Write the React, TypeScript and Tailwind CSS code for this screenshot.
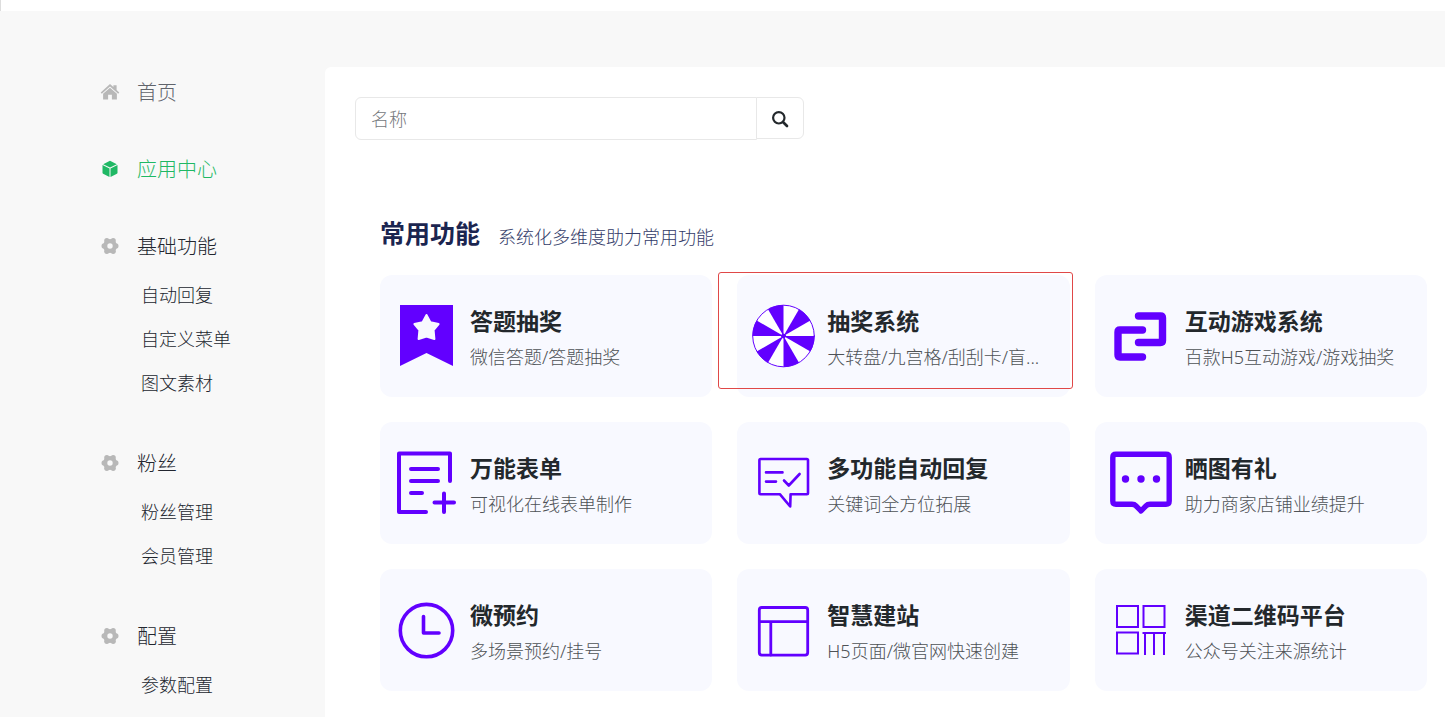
import type { ReactNode } from "react";

const PURPLE = "#6200ff";

function HomeIcon() {
  return (
    <svg viewBox="0 0 20 18" className="h-[18px] w-5" fill="#b8b8b8" aria-hidden="true">
      <path d="M10 1 13.4 4.1V2.2H16.6V7L19.3 9.5 18.2 10.8 10 3.6 1.8 10.8.7 9.5Z" />
      <path d="M10 4.7 16.9 10.8V16.6H11.9V11.8H8.1V16.6H3.1V10.8Z" />
    </svg>
  );
}

function CubeIcon() {
  return (
    <svg viewBox="0 0 18 18" className="h-[18px] w-[18px]" fill="#1fb864" aria-hidden="true">
      <path d="M9 .8 15.8 4.2 9 7.5 2.2 4.2Z" />
      <path d="M1.5 5.1 8.5 8.5V17L2.1 13.8Q1.5 13.5 1.5 12.8Z" />
      <path d="M16.5 5.1 9.5 8.5V17L15.9 13.8Q16.5 13.5 16.5 12.8Z" />
    </svg>
  );
}

function GearIcon() {
  return (
    <svg viewBox="0 0 18 18" className="h-[18px] w-[18px]" aria-hidden="true">
      <circle cx="9" cy="9" r="4.8" strokeWidth="4.2" fill="none" stroke="#b8b8b8" />
      <g fill="#b8b8b8">
        <circle cx="3.2" cy="9" r="2.7" />
        <circle cx="14.8" cy="9" r="2.7" />
        <circle cx="5.8" cy="3.7" r="2.6" />
        <circle cx="12.2" cy="3.7" r="2.6" />
        <circle cx="5.8" cy="14.3" r="2.6" />
        <circle cx="12.2" cy="14.3" r="2.6" />
      </g>
    </svg>
  );
}

function CardIcon({ width = 3, children }: { width?: number; children: ReactNode }) {
  return (
    <svg
      viewBox="0 0 64 64"
      className="h-16 w-16 shrink-0"
      fill="none"
      stroke={PURPLE}
      strokeWidth={width}
      strokeLinecap="round"
      strokeLinejoin="round"
      aria-hidden="true"
    >
      {children}
    </svg>
  );
}

function wedge(index: number) {
  const at = (deg: number) => {
    const rad = (deg * Math.PI) / 180;
    return `${(31.5 + 31 * Math.cos(rad)).toFixed(2)} ${(32 + 31 * Math.sin(rad)).toFixed(2)}`;
  };
  return `M31.5 32L${at(index * 60)}A31 31 0 0 1 ${at(index * 60 + 30)}Z`;
}

const bookmark = (
  <CardIcon width={0}>
    <path fill={PURPLE} d="M5 1H58V62L31.5 49 5 62Z" />
    <path
      fill="#f8f9ff"
      stroke="#f8f9ff"
      strokeWidth="2"
      d="M31.5 11 35.4 18.2 43.6 20 38.6 26 39.4 35 31.5 32.6 23.6 35 24.4 26 19.4 20 27.6 18.2Z"
    />
  </CardIcon>
);

const wheel = (
  <CardIcon width={1}>
    <circle cx="31.5" cy="32" r="30.8" fill="#fff" />
    {[0, 1, 2, 3, 4, 5].map((i) => (
      <path key={i} d={wedge(i)} fill={PURPLE} stroke="none" />
    ))}
    <circle cx="31.5" cy="32" r="2" fill={PURPLE} />
  </CardIcon>
);

const link = (
  <CardIcon width={7.4}>
    <path d="M28.5 12H50.5Q52.5 12 52.5 14V36.5Q52.5 38.5 50.5 38.5H28.5M32.5 26H10Q8 26 8 28V51Q8 53 10 53H32.5" />
  </CardIcon>
);

const form = (
  <CardIcon width={4}>
    <path d="M55 30V2.5H4V61H31M16 18H43M16 30H43M16 42H27M39.5 51.5H59M49 42.5V61" />
  </CardIcon>
);

const reply = (
  <CardIcon width={2.6}>
    <path d="M8.6 8H54.8Q56 8 56 9.2V42Q56 43.2 54.8 43.2H38.6L38.2 55.5 27.8 43.2H8.6Q7.4 43.2 7.4 42V9.2Q7.4 8 8.6 8Z" />
    <path d="M14 21.4H30.5M14 30.6H24M32 29.5 36.8 34.5 47.6 23" />
  </CardIcon>
);

const chat = (
  <CardIcon width={5.4}>
    <path d="M6 3.2H56Q59.2 3.2 59.2 6.4V50Q59.2 53.2 56 53.2H40Q37.5 53.2 36 54.8L31 60 26 54.8Q24.5 53.2 22 53.2H6Q2.8 53.2 2.8 50V6.4Q2.8 3.2 6 3.2Z" />
    <g fill={PURPLE} stroke="none">
      <circle cx="15.5" cy="28" r="3.7" />
      <circle cx="31" cy="28" r="3.7" />
      <circle cx="46.5" cy="28" r="3.7" />
    </g>
  </CardIcon>
);

const clock = (
  <CardIcon width={3.6}>
    <circle cx="31.5" cy="32.6" r="26.2" />
    <path d="M28.5 18.5V35H44" />
  </CardIcon>
);

const layout = (
  <CardIcon width={2.8}>
    <rect x="7.3" y="9.5" width="48.4" height="47.6" rx="2.5" />
    <path d="M7.3 23.7H55.7M18.8 23.7V57" />
  </CardIcon>
);

const qr = (
  <CardIcon width={2}>
    <g strokeLinejoin="miter" strokeLinecap="butt">
      <rect x="7" y="8" width="21" height="21" />
      <rect x="33.5" y="8" width="21" height="21" />
      <rect x="7" y="34.5" width="21" height="21" />
      <path d="M32.5 35H56M35 35V57M44 35V57M54 35V57" />
    </g>
  </CardIcon>
);

interface Feature {
  title: string;
  text: string;
  icon: ReactNode;
  marked?: boolean;
}

const features: Feature[] = [
  { title: "答题抽奖", text: "微信答题/答题抽奖", icon: bookmark },
  { title: "抽奖系统", text: "大转盘/九宫格/刮刮卡/盲...", icon: wheel, marked: true },
  { title: "互动游戏系统", text: "百款H5互动游戏/游戏抽奖", icon: link },
  { title: "万能表单", text: "可视化在线表单制作", icon: form },
  { title: "多功能自动回复", text: "关键词全方位拓展", icon: reply },
  { title: "晒图有礼", text: "助力商家店铺业绩提升", icon: chat },
  { title: "微预约", text: "多场景预约/挂号", icon: clock },
  { title: "智慧建站", text: "H5页面/微官网快速创建", icon: layout },
  { title: "渠道二维码平台", text: "公众号关注来源统计", icon: qr },
];

const groups = [
  { title: "基础功能", items: ["自动回复", "自定义菜单", "图文素材"] },
  { title: "粉丝", items: ["粉丝管理", "会员管理"] },
  { title: "配置", items: ["参数配置"] },
];

function NavRow({ icon, children }: { icon: ReactNode; children: ReactNode }) {
  return (
    <span className="flex h-[34px] items-center text-xl">
      <span className="mr-[17px] flex w-5 justify-center">{icon}</span>
      <span className="pt-0.5">{children}</span>
    </span>
  );
}

function Sidebar() {
  return (
    <nav className="w-[325px] shrink-0 pt-16 pl-[100px] font-light">
      <a href="#home" className="mb-[43px] block text-[#60646c]">
        <NavRow icon={<HomeIcon />}>首页</NavRow>
      </a>
      <a href="#apps" className="mb-[43px] block text-[#1fb864]">
        <NavRow icon={<CubeIcon />}>应用中心</NavRow>
      </a>
      {groups.map((group) => (
        <div key={group.title} className="mb-[41px] text-[#22262f]">
          <NavRow icon={<GearIcon />}>{group.title}</NavRow>
          <ul className="mt-[10px] pl-[41px]">
            {group.items.map((item) => (
              <li key={item}>
                <a href="#menu" className="flex h-11 items-center text-lg">
                  {item}
                </a>
              </li>
            ))}
          </ul>
        </div>
      ))}
    </nav>
  );
}

function SearchBar() {
  return (
    <form className="flex items-start" onSubmit={(e) => e.preventDefault()}>
      <input
        type="text"
        aria-label="名称"
        placeholder="名称"
        className="h-[43px] w-[402px] rounded-l-md border border-[#e8e8e8] bg-white px-[15px] text-lg font-light outline-none placeholder:text-[#75787c]"
      />
      <button
        type="submit"
        aria-label="搜索"
        className="-ml-px flex h-[42px] w-12 items-center justify-center rounded-r-md border border-[#e8e8e8] bg-white pt-0.5"
      >
        <svg viewBox="0 0 18 18" className="h-[18px] w-[18px]" fill="none" stroke="#23282c" aria-hidden="true">
          <circle cx="7.8" cy="7.8" r="5.7" strokeWidth="2.2" />
          <path d="M12.2 12.2 16 16" strokeWidth="2.7" strokeLinecap="round" />
        </svg>
      </button>
    </form>
  );
}

function FeatureCard({ feature }: { feature: Feature }) {
  return (
    <a
      href="#feature"
      className="relative flex h-[122px] items-center gap-[11px] rounded-xl bg-[#f8f9ff] pr-6 pl-[15px]"
    >
      {feature.icon}
      <span className="min-w-0 flex-1 pt-1.5">
        <span className="block truncate text-[23px] leading-9 font-bold text-[#23282c]">{feature.title}</span>
        <span className="block truncate text-lg leading-9 font-light text-[#4e5256]">{feature.text}</span>
      </span>
      {feature.marked && (
        <span className="pointer-events-none absolute -top-[3px] -right-[3px] bottom-2 -left-[19px] rounded-[3px] border border-[#e04848]" />
      )}
    </a>
  );
}

export default function App() {
  return (
    <div className="flex min-h-screen flex-col bg-[#f8f8f8] font-['Noto_Sans','Noto_Sans_CJK_SC',sans-serif]">
      <header className="h-[11px] border-l border-[#dddddd] bg-white" />
      <div className="flex flex-1">
        <Sidebar />
        <main className="mt-14 min-w-0 flex-1 rounded-tl-md bg-white pt-[30px] pl-[30px]">
          <SearchBar />
          <section className="pt-[73px] pr-[18px] pb-6 pl-[25px]">
            <div className="flex h-12 items-start gap-[18px]">
              <h1 className="text-[25px] leading-10 font-bold text-[#1b2550]">常用功能</h1>
              <p className="pt-1 text-lg leading-10 font-light text-[#333b68]">系统化多维度助力常用功能</p>
            </div>
            <div className="mt-[14px] grid grid-cols-3 gap-[25px]">
              {features.map((feature) => (
                <FeatureCard key={feature.title} feature={feature} />
              ))}
            </div>
          </section>
        </main>
      </div>
    </div>
  );
}
